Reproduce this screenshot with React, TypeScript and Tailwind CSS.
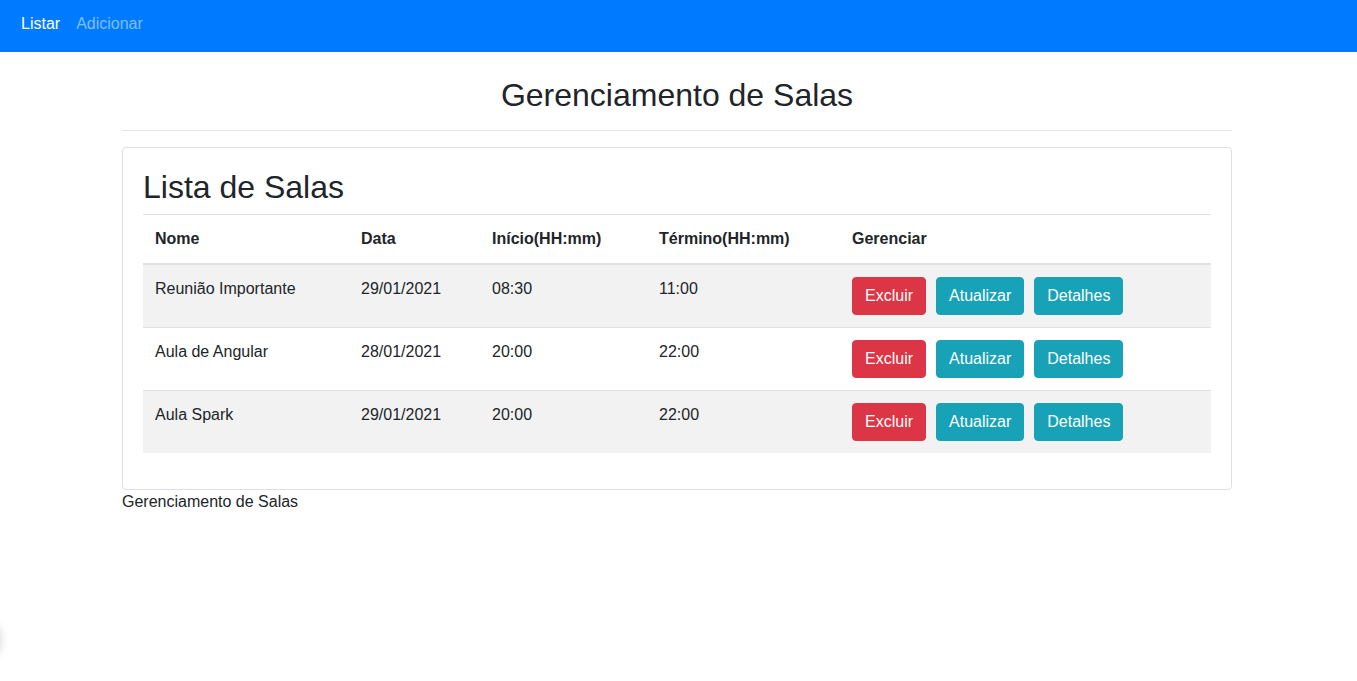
import React from "react";

const rows = [
  { nome: "Reunião Importante", data: "29/01/2021", inicio: "08:30", fim: "11:00" },
  { nome: "Aula de Angular", data: "28/01/2021", inicio: "20:00", fim: "22:00" },
  { nome: "Aula Spark", data: "29/01/2021", inicio: "20:00", fim: "22:00" },
];

export default function App() {
  return (
    <div
      className="relative min-h-[681px] bg-white text-[#212529] text-[16px] leading-6 overflow-hidden"
      style={{ fontFamily: '"Liberation Sans", Arial, sans-serif' }}
    >
      <nav className="h-[52px] bg-[#007bff] flex items-center pl-[13px] pb-[4px]">
        <a className="px-2 text-white">Listar</a>
        <a className="px-2 text-white/50">Adicionar</a>
      </nav>

      <div className="w-[1110px] ml-[122px]">
        <h2 className="mt-6 text-[32px] leading-[38px] text-center font-normal">
          Gerenciamento de Salas
        </h2>
        <hr className="my-4 border-0 border-t border-black/10" />

        <div className="border border-black/[0.125] rounded-[4px] p-5">
          <h1 className="text-[32px] leading-[38px] font-normal mb-2">Lista de Salas</h1>
          <table className="w-full mb-4 border-collapse">
            <thead>
              <tr>
                <th className="w-[206px] text-left font-bold px-3 py-3 border-t border-[#dee2e6] border-b-2 align-bottom">Nome</th>
                <th className="w-[131px] text-left font-bold px-3 py-3 border-t border-[#dee2e6] border-b-2 align-bottom">Data</th>
                <th className="w-[167px] text-left font-bold px-3 py-3 border-t border-[#dee2e6] border-b-2 align-bottom">Início(HH:mm)</th>
                <th className="w-[193px] text-left font-bold px-3 py-3 border-t border-[#dee2e6] border-b-2 align-bottom">Término(HH:mm)</th>
                <th className="text-left font-bold px-3 py-3 border-t border-[#dee2e6] border-b-2 align-bottom">Gerenciar</th>
              </tr>
            </thead>
            <tbody>
              {rows.map((r, i) => (
                <tr key={i} className={i % 2 === 0 ? "bg-[#f2f2f2]" : ""}>
                  <td className={`px-3 py-3 align-top ${i > 0 ? "border-t border-[#dee2e6]" : ""}`}>{r.nome}</td>
                  <td className={`px-3 py-3 align-top ${i > 0 ? "border-t border-[#dee2e6]" : ""}`}>{r.data}</td>
                  <td className={`px-3 py-3 align-top ${i > 0 ? "border-t border-[#dee2e6]" : ""}`}>{r.inicio}</td>
                  <td className={`px-3 py-3 align-top ${i > 0 ? "border-t border-[#dee2e6]" : ""}`}>{r.fim}</td>
                  <td className={`px-3 py-3 align-top ${i > 0 ? "border-t border-[#dee2e6]" : ""}`}>
                    <div className="flex gap-[10px]">
                      <button className="h-[38px] px-[12px] rounded-[4px] bg-[#dc3545] text-white border border-[#dc3545]">Excluir</button>
                      <button className="h-[38px] px-[12px] rounded-[4px] bg-[#17a2b8] text-white border border-[#17a2b8]">Atualizar</button>
                      <button className="h-[38px] px-[12px] rounded-[4px] bg-[#17a2b8] text-white border border-[#17a2b8]">Detalhes</button>
                    </div>
                  </td>
                </tr>
              ))}
            </tbody>
          </table>
        </div>
        <p>Gerenciamento de Salas</p>
      </div>

      <div className="absolute left-[-40px] top-[618px] w-[40px] h-[44px] rounded-full shadow-[0_0_8px_rgba(0,0,0,0.18)]" />
    </div>
  );
}
